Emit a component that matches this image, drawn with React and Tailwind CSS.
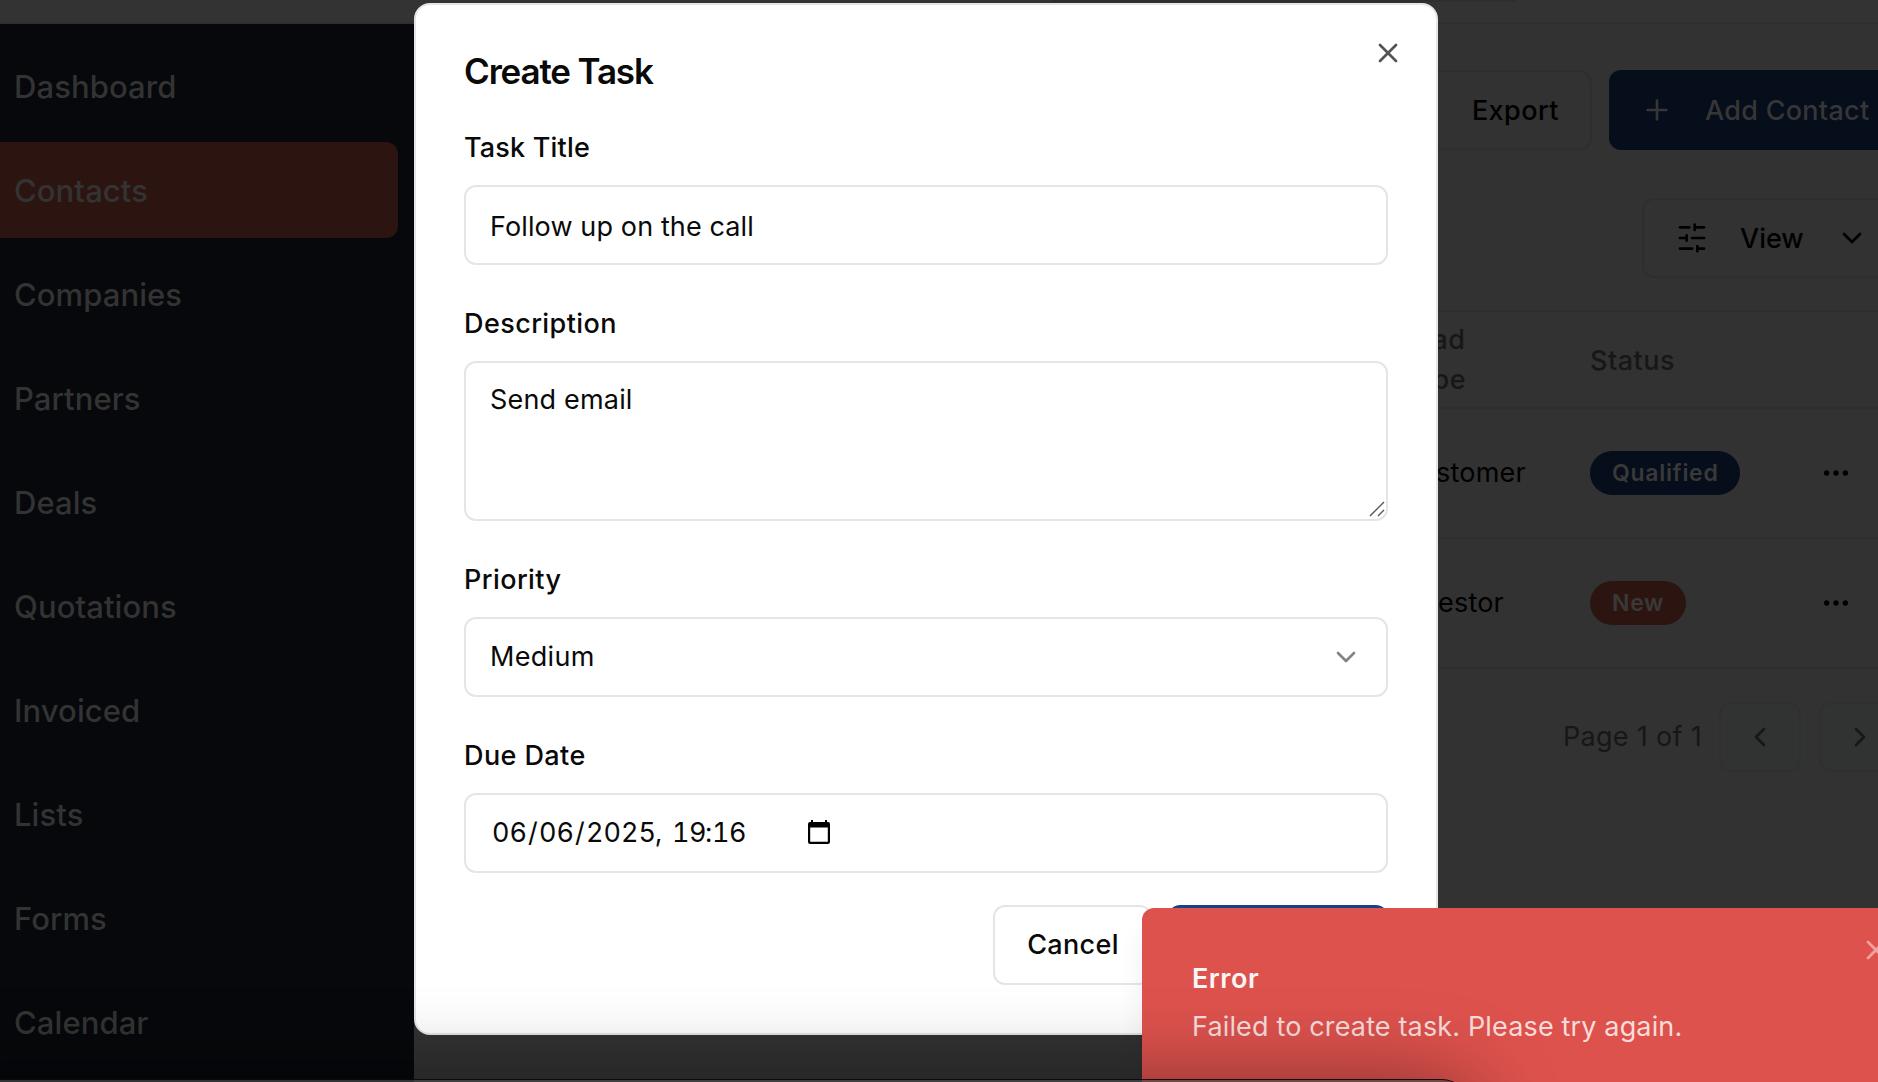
import React from "react";
import { X, Plus, ChevronDown, ChevronLeft, ChevronRight, Ellipsis } from "lucide-react";

const NAV = ["Dashboard", "Contacts", "Companies", "Partners", "Deals", "Quotations", "Invoiced", "Lists", "Forms", "Calendar"];

function SlidersIcon() {
  return (
    <svg width="32" height="32" viewBox="0 0 24 24" fill="none" stroke="currentColor" strokeWidth="2" strokeLinecap="round" strokeLinejoin="round" className="shrink-0">
      <path d="M21 4h-7M10 4H3M21 12h-9M8 12H3M21 20h-5M12 20H3M14 2v4M8 10v4M16 18v4" />
    </svg>
  );
}

function CalendarIcon() {
  return (
    <svg width="22" height="24" viewBox="0 0 22 24" className="mb-[2px] shrink-0">
      <path fill="#000" fillRule="evenodd" d="M3 0h2v2h12V0h2v2h1a2 2 0 0 1 2 2v18a2 2 0 0 1-2 2H2a2 2 0 0 1-2-2V4a2 2 0 0 1 2-2h1zM2.2 7.6v14.2h17.6V7.6z" />
    </svg>
  );
}

function Sidebar() {
  return (
    <aside className="h-full w-[414px] shrink-0 bg-[#06080b] pt-[14px] pr-4">
      <nav className="flex flex-col gap-2">
        {NAV.map((item) => (
          <a
            key={item}
            className={
              "flex h-24 items-center rounded-r-xl pt-[2px] pl-[14px] text-[31px] font-medium tracking-[0.08px] text-[#333333] " +
              (item === "Contacts" ? "bg-[#2c1511]" : "")
            }
          >
            {item}
          </a>
        ))}
      </nav>
    </aside>
  );
}

function TableRow({ type, status, tone }) {
  return (
    <div className="flex h-[130px] items-center border-b-2 border-[#2e2e2e]">
      <div className="w-[190px] pt-px tracking-[0.2px] text-black">{type}</div>
      <div className="w-[234px]">
        <span className={"inline-flex h-11 items-center rounded-full pt-px pr-[22px] pl-[22px] text-[23px] font-semibold tracking-[0.7px] text-[#393939] " + tone}>
          {status}
        </span>
      </div>
      <Ellipsis size={32} className="-ml-[4px] text-black" />
    </div>
  );
}

function Main() {
  return (
    <main className="flex min-w-0 flex-1 flex-col bg-[#323232] text-[27px]">
      <div className="mt-[46px] ml-[894px] flex h-20 w-[700px] gap-[17px] font-medium">
        <div className="flex w-[284px] shrink-0 items-center justify-end rounded-xl border-2 border-[#2e2e2e] pt-[2px] pr-[31px] tracking-[0.45px] text-black">Export</div>
        <div className="flex w-[300px] shrink-0 items-center rounded-xl bg-[#060d1b] pl-8 text-[#363636]">
          <Plus size={32} />
          <span className="ml-8 pt-[2px] tracking-[0.28px] whitespace-nowrap">Add Contact</span>
        </div>
      </div>
      <div className="mt-12 ml-[1228px] flex h-20 w-[260px] shrink-0 items-center rounded-xl border-2 border-[#2e2e2e] pl-8 font-medium text-black">
        <SlidersIcon />
        <span className="ml-8 w-[64px] pt-[2px]">View</span>
        <ChevronDown size={32} className="ml-8 shrink-0" />
      </div>
      <div className="mt-8 border-t-2 border-[#2e2e2e] pl-[986px]">
        <div className="-ml-[986px] border-b-2 border-[#2e2e2e] pl-[986px]">
          <div className="flex h-[95px] items-center font-medium tracking-[0.5px] text-[#171716]">
            <div className="w-[190px] pt-px leading-10">Lead<br />Type</div>
            <div className="pt-[3px]">Status</div>
          </div>
        </div>
        <TableRow type="Customer" status="Qualified" tone="bg-[#060d1b]" />
        <TableRow type="Investor" status="New" tone="bg-[#2c1511]" />
      </div>
      <div className="mt-[33px] ml-[1149px] flex w-[400px] items-center text-[#171716]">
        <span className="w-[156px] pt-px tracking-[0.3px] whitespace-nowrap">Page 1 of 1</span>
        <div className="flex gap-[18px]">
          <div className="flex h-[70px] w-[82px] shrink-0 items-center justify-center rounded-xl border-2 border-[#2f3130] bg-[#303331]">
            <ChevronLeft size={32} />
          </div>
          <div className="flex h-[70px] w-[82px] shrink-0 items-center justify-center rounded-xl border-2 border-[#2f3130] bg-[#303331]">
            <ChevronRight size={32} />
          </div>
        </div>
      </div>
    </main>
  );
}

function Field({ label, tight, children }) {
  return (
    <div className="mt-11">
      <div className={"mb-[23px] pt-px text-[27px] leading-[28px] font-medium " + (tight ? "tracking-[0.18px]" : "tracking-[0.42px]")}>{label}</div>
      {children}
    </div>
  );
}

function DateValue() {
  return (
    <div className="flex tabular-nums">
      <span className="w-[36px]">06</span>
      <span className="w-[11px]">/</span>
      <span className="w-[36px]">06</span>
      <span className="w-[11px]">/</span>
      <span className="w-[69px]">2025</span>
      <span className="w-[17px]">,</span>
      <span className="w-[33px] tracking-[-0.6px]">19</span>
      <span className="w-[7px]">:</span>
      <span className="w-[36px] tracking-[-0.6px]">16</span>
    </div>
  );
}

function Dialog() {
  return (
    <div className="absolute top-[3px] left-[414px] h-[1032px] w-[1024px] rounded-2xl border-2 border-[#e5e5e5] bg-white p-12 text-[27px] text-[#0a0a0a]">
      <X size={32} className="absolute top-8 right-8 text-[#545454]" />
      <h2 className="text-[35px] leading-[36px] font-semibold tracking-[-1.15px]">Create Task</h2>
      <Field label="Task Title" tight>
        <div className="flex h-20 items-center rounded-xl border-2 border-[#e5e5e5] pt-1 pl-6 tracking-[0.12px]">Follow up on the call</div>
      </Field>
      <Field label="Description">
        <div className="relative h-40 rounded-xl border-2 border-[#e5e5e5] pt-[17px] pl-6 leading-10 tracking-[0.18px]">
          Send email
          <svg width="16" height="16" viewBox="0 0 16 16" className="absolute right-[1px] bottom-[2px]" stroke="#555" strokeWidth="1.4">
            <path d="M1 15L15 1M9 15l6-6" />
          </svg>
        </div>
      </Field>
      <Field label="Priority">
        <div className="flex h-20 items-center justify-between rounded-xl border-2 border-[#e5e5e5] pr-6 pl-6 tracking-[0.3px]">
          <span className="pt-px">Medium</span>
          <ChevronDown size={32} className="text-[#848484]" />
        </div>
      </Field>
      <Field label="Due Date">
        <div className="flex h-20 items-center rounded-xl border-2 border-[#e5e5e5] pl-[26px]">
          <div className="w-[316px] pt-px"><DateValue /></div>
          <CalendarIcon />
        </div>
      </Field>
      <div className="mt-8 flex justify-end gap-4 font-medium">
        <div className="flex h-20 w-[159px] items-center justify-center rounded-xl border-2 border-[#e5e5e5] pt-px pl-px tracking-[0.33px]">Cancel</div>
        <div className="h-20 w-[220px] rounded-xl bg-[#1a3f8c]" />
      </div>
    </div>
  );
}

function Toast() {
  return (
    <div className="absolute top-[908px] left-[1142px] h-[220px] w-[780px] rounded-xl bg-[#de524d] pt-[57px] pl-[50px] text-[27px] shadow-[0_20px_30px_-6px_rgba(0,0,0,0.1)]">
      <X size={32} className="absolute top-[26px] left-[718px] text-[#f2a19e]" />
      <div className="leading-[28px] font-semibold tracking-[0.5px] text-[#fbf6f6]">Error</div>
      <div className="mt-[14px] leading-10 tracking-[0.15px] text-[#f8dcdb]">Failed to create task. Please try again.</div>
    </div>
  );
}

export default function App() {
  return (
    <div className="relative flex h-[1082px] w-[1878px] flex-col overflow-hidden bg-[#323232] font-['Inter',sans-serif]">
      <header className="flex h-6 shrink-0 items-start justify-end border-b-2 border-[#2e2e2e] bg-[#333333] pr-[362px]">
        <div className="h-[2px] w-[464px] rounded-b-xl bg-[#2e2e2e]" />
      </header>
      <div className="flex min-h-0 flex-1">
        <Sidebar />
        <Main />
      </div>
      <Dialog />
      <Toast />
      {/* neighbouring window peeking in along the bottom edge */}
      <div className="absolute top-[1079px] -left-20 h-[300px] w-[1550px] rounded-[28px] border border-black/80 bg-[#464646]/70 shadow-[0_8px_90px_rgba(0,0,0,0.48)]" />
    </div>
  );
}
